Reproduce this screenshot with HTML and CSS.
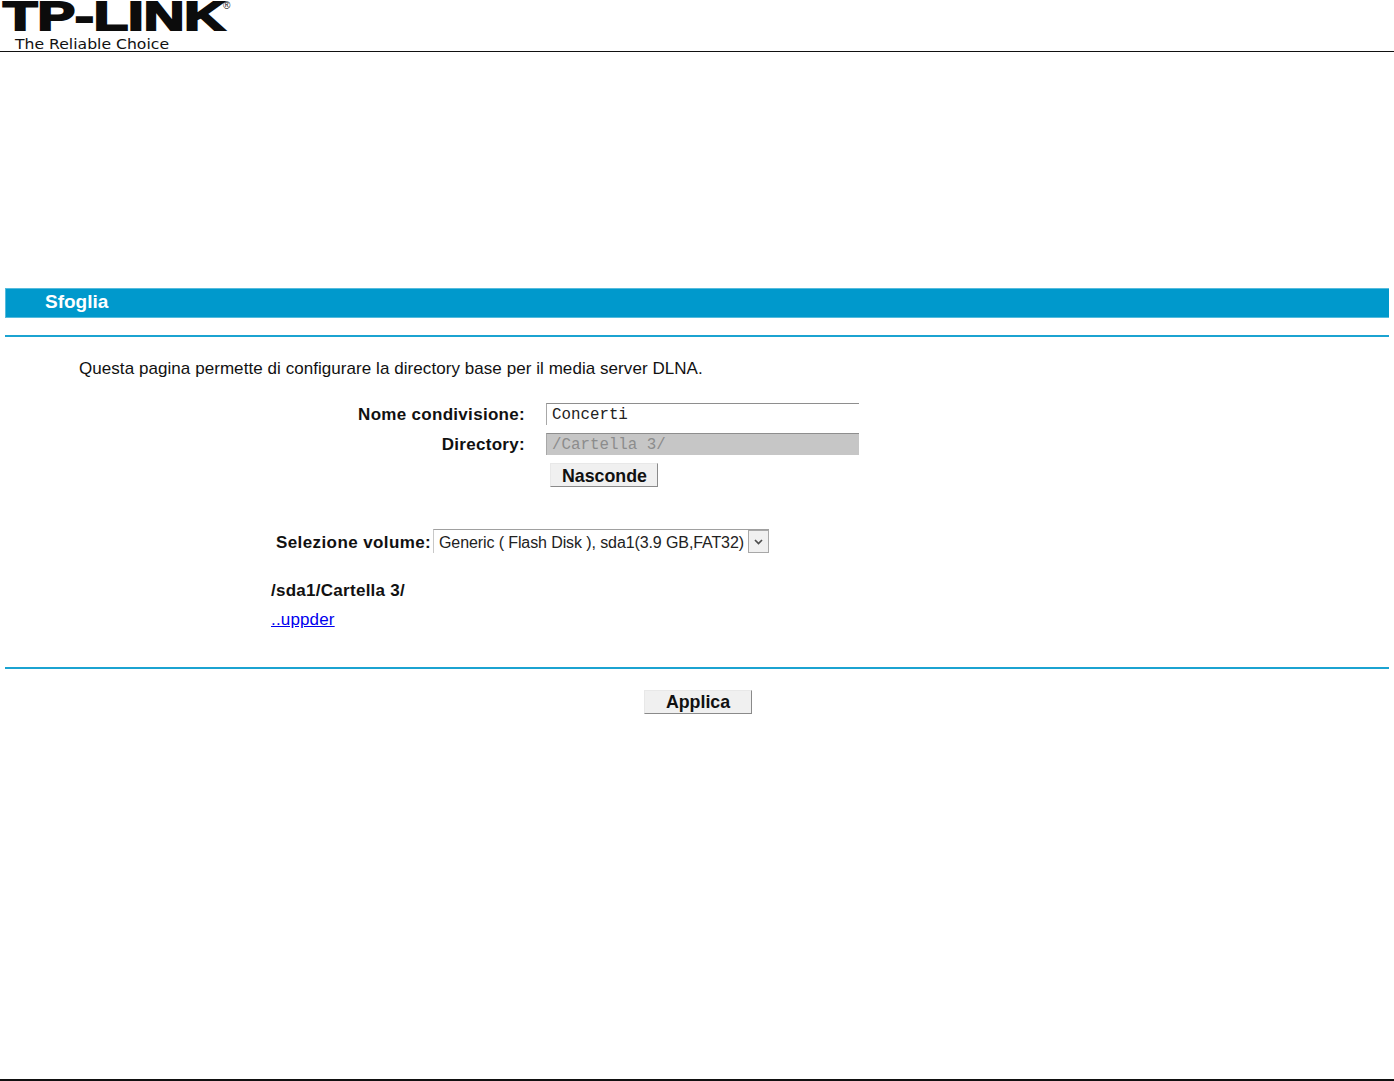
FILE: index.html
```html
<!DOCTYPE html>
<html lang="it">
<head>
<meta charset="utf-8">
<title>Sfoglia</title>
<link rel="stylesheet" href="styles.css">
</head>
<body>
<div class="page">
  <header class="top">
    <svg class="logo" width="240" height="51" viewBox="0 0 240 51">
      <text class="logo-word" x="3" y="29.500" textLength="222" lengthAdjust="spacingAndGlyphs">TP-LINK</text>
      <text class="logo-reg" x="223" y="9">®</text>
      <text class="logo-tag" x="15" y="49" textLength="154" lengthAdjust="spacingAndGlyphs">The Reliable Choice</text>
    </svg>
  </header>
  <main class="content">
    <h1 class="banner">Sfoglia</h1>
    <hr class="rule rule-first">
    <p class="intro">Questa pagina permette di configurare la directory base per il media server DLNA.</p>
    <form class="form">
      <label class="form-label" for="share">Nome condivisione:</label>
      <input class="field" id="share" type="text" value="Concerti">
      <label class="form-label" for="dir">Directory:</label>
      <input class="field field-off" id="dir" type="text" value="/Cartella 3/" disabled>
      <button class="btn btn-hide" type="button">Nasconde</button>
    </form>
    <div class="volume">
      <span class="volume-label">Selezione volume:</span>
      <div class="select">
        <span class="select-text">Generic ( Flash Disk ), sda1(3.9 GB,FAT32)</span>
        <span class="select-arrow">
          <svg width="9" height="6" viewBox="0 0 9 6"><path d="M1 1l3.500 3.500L8 1" fill="none" stroke="#4d4d4d" stroke-width="1.700"/></svg>
        </span>
      </div>
    </div>
    <div class="path">/sda1/Cartella 3/</div>
    <a class="up" href="#">..uppder</a>
    <hr class="rule rule-last">
    <div class="actions"><button class="btn btn-apply" type="button">Applica</button></div>
  </main>
  <div class="bottom"></div>
</div>
</body>
</html>
```
FILE: styles.css
```css
* { box-sizing: border-box; }
html, body { margin: 0; padding: 0; background: #fff; }
body { font-family: "Liberation Sans", Arial, sans-serif; font-size: 17px; color: #111; }
.page { height: 1081px; display: flex; flex-direction: column; overflow: hidden; }
.top { height: 52px; border-bottom: 1px solid #111; flex: none; }
.logo { display: block; }
.logo-word { font-family: "Liberation Sans", sans-serif; font-weight: 700; font-size: 40px; fill: #0c0c0c; stroke: #0c0c0c; stroke-width: 2px; }
.logo-reg { font-family: "Liberation Sans", sans-serif; font-size: 10px; fill: #111; }
.logo-tag { font-family: "DejaVu Sans", sans-serif; font-size: 14px; fill: #111; }
.content { flex: 1; padding: 236px 5px 0; }
.banner { margin: 0; height: 30px; padding-left: 39px; background: #0099cc; border: 1px solid #55bbdd; border-right: 0; color: #fff; font-size: 19px; line-height: 25px; font-weight: 700; }
.rule { margin: 0; border: 0; height: 2px; background: #1ba3d1; }
.rule-first { margin-top: 17px; }
.intro { margin: 0; padding: 22px 0 0 74px; line-height: 20px; height: 66px; letter-spacing: 0.06px; }
.form { display: grid; grid-template-columns: 520px 313px; column-gap: 21px; grid-auto-rows: 22px; row-gap: 8px; align-items: center; }
.form-label { text-align: right; font-weight: 700; letter-spacing: 0.3px; padding-top: 2px; }
.field { width: 313px; height: 22px; padding: 0 5px; font-family: "Liberation Mono", monospace; font-size: 15.800px; color: #222; background: #fff; border: 0; border-top: 1px solid #8e8e8e; border-left: 1px solid #a8a8a8; outline: 0; }
.field-off { background: #c6c6c6; color: #8c8c8c; }
.btn { font-family: "Liberation Sans", sans-serif; font-weight: 700; font-size: 17.800px; color: #111; background: #f0f0f0; border: 0; border-right: 1px solid #8a8a8a; border-bottom: 1px solid #8a8a8a; border-top: 1px solid #e8e8e8; border-left: 1px solid #e8e8e8; padding: 1px 0 0 1px; height: 24px; line-height: 22px; }
.btn-hide { grid-column: 2; width: 108px; margin-left: 4px; align-self: start; }
.btn-apply { width: 108px; padding: 0; }
.volume { display: flex; align-items: center; margin: 44px 0 0 271px; height: 24px; }
.volume-label { font-weight: 700; letter-spacing: 0.4px; width: 157px; white-space: nowrap; padding-top: 3px; }
.select { display: flex; width: 336px; height: 24px; border-top: 1px solid #a0a0a0; border-left: 1px solid #c8c8c8; }
.select-text { flex: 1; padding: 1px 0 0 5px; font-size: 16px; line-height: 24px; white-space: nowrap; color: #222; letter-spacing: -0.1px; }
.select-arrow { width: 21px; height: 23px; display: flex; align-items: center; justify-content: center; background: #f0f0f0; border: 1px solid #a8a8a8; }
.path { margin: 28px 0 0 266px; font-weight: 700; line-height: 20px; letter-spacing: 0.27px; }
.up { display: inline-block; margin: 9px 0 0 266px; color: #0000ee; line-height: 20px; letter-spacing: 0.16px; }
.rule-last { margin-top: 37px; }
.actions { display: flex; justify-content: center; padding: 21px 0 0 2px; }
.bottom { height: 2px; background: #111; flex: none; }
```
